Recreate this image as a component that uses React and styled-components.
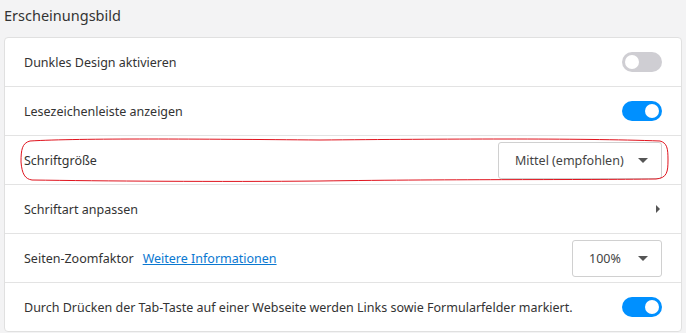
import React from "react";
import styled, { createGlobalStyle } from "styled-components";

const GlobalStyle = createGlobalStyle`
  body {
    margin: 0;
    background: #f3f3f4;
    font-family: "Noto Sans", "Open Sans", sans-serif;
    color: #333;
  }
`;

const Page = styled.div`
  padding: 4px 4px 0 4px;
  width: 686px;
  box-sizing: border-box;
`;

const Heading = styled.h2`
  margin: 0 0 9px 0;
  height: 24px;
  line-height: 22px;
  font-size: 14.5px;
  font-weight: 400;
  color: #333;
`;

const Card = styled.div`
  position: relative;
  background: #fff;
  border: 1px solid #e0e0e0;
  border-radius: 4px;
`;

const Row = styled.div`
  display: flex;
  align-items: center;
  justify-content: space-between;
  height: 48px;
  padding: 0 19px 0 19px;
  border-top: ${(p) => (p.first ? "none" : "1px solid #e3e3e3")};
  font-size: 12.5px;
`;

const Label = styled.div`
  display: flex;
  align-items: center;
  gap: 9px;
`;

const Link = styled.a`
  color: #0a78d1;
  text-decoration: underline;
  cursor: pointer;
`;

const Toggle = styled.div`
  position: relative;
  width: 40px;
  height: 20px;
  border-radius: 10px;
  background: ${(p) => (p.on ? "#0090ff" : "#cfced3")};
  &::after {
    content: "";
    position: absolute;
    top: 3px;
    left: ${(p) => (p.on ? "23px" : "3px")};
    width: 14px;
    height: 14px;
    border-radius: 50%;
    background: #fff;
  }
`;

const Select = styled.div`
  display: flex;
  align-items: center;
  justify-content: space-between;
  box-sizing: border-box;
  width: ${(p) => p.w}px;
  height: 37px;
  padding: 0 13px 0 16px;
  border: 1px solid #d0d0d0;
  border-radius: 3px;
  color: #444;
  font-size: 12.5px;
`;

const Caret = styled.span`
  width: 0;
  height: 0;
  border-left: 5px solid transparent;
  border-right: 5px solid transparent;
  border-top: 5px solid #555;
`;

const Chevron = styled.span`
  width: 0;
  height: 0;
  margin-right: 2px;
  border-top: 4px solid transparent;
  border-bottom: 4px solid transparent;
  border-left: 4px solid #555;
`;

const Markup = styled.svg`
  position: absolute;
  left: 15px;
  top: 100px;
  pointer-events: none;
`;

export default function App() {
  return (
    <>
      <GlobalStyle />
      <Page>
        <Heading>Erscheinungsbild</Heading>
        <Card>
          <Row first>
            <Label>Dunkles Design aktivieren</Label>
            <Toggle />
          </Row>
          <Row>
            <Label>Lesezeichenleiste anzeigen</Label>
            <Toggle on />
          </Row>
          <Row>
            <Label>Schriftgröße</Label>
            <Select w={164}>
              Mittel (empfohlen)
              <Caret />
            </Select>
          </Row>
          <Row>
            <Label>Schriftart anpassen</Label>
            <Chevron />
          </Row>
          <Row>
            <Label>
              Seiten-Zoomfaktor <Link>Weitere Informationen</Link>
            </Label>
            <Select w={90}>
              100%
              <Caret />
            </Select>
          </Row>
          <Row>
            <Label>
              Durch Drücken der Tab-Taste auf einer Webseite werden Links sowie
              Formularfelder markiert.
            </Label>
            <Toggle on />
          </Row>
          <Markup width="650" height="46" viewBox="0 0 650 46">
            <path
              d="M10 3 C 60 0, 180 1, 300 2 C 420 1, 560 0, 640 3 C 647 5, 648 10, 648 22 C 648 34, 647 40, 636 41 C 560 42, 440 41, 300 43 C 200 44, 80 43, 12 42 C 5 41, 2 36, 1 24 C 1 12, 2 5, 10 3 Z"
              fill="none"
              stroke="#e0141e"
              strokeWidth="1"
            />
          </Markup>
        </Card>
      </Page>
    </>
  );
}
